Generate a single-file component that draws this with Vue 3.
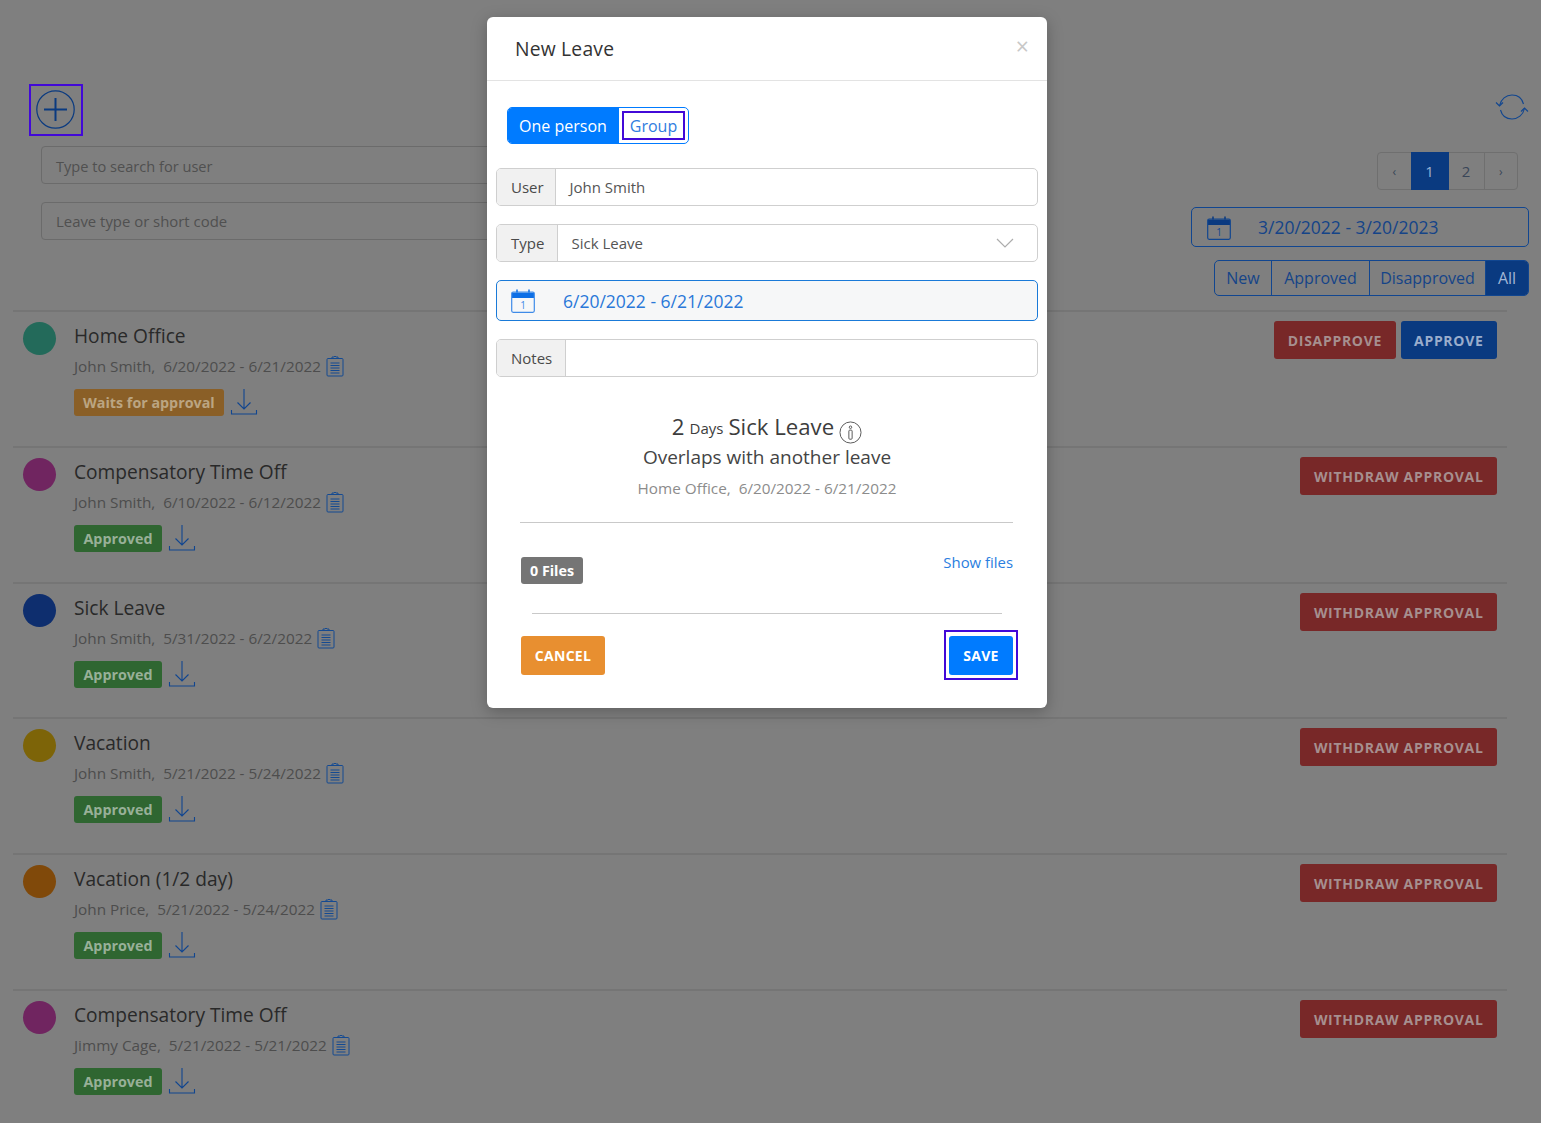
<script setup>
const rows = [
  { title: 'Home Office', color: '#236a5a', who: 'John Smith', dates: '6/20/2022 - 6/21/2022', status: 'Waits for approval', pending: true },
  { title: 'Compensatory Time Off', color: '#702560', who: 'John Smith', dates: '6/10/2022 - 6/12/2022', status: 'Approved' },
  { title: 'Sick Leave', color: '#0e2e6e', who: 'John Smith', dates: '5/31/2022 - 6/2/2022', status: 'Approved' },
  { title: 'Vacation', color: '#7d6408', who: 'John Smith', dates: '5/21/2022 - 5/24/2022', status: 'Approved' },
  { title: 'Vacation (1/2 day)', color: '#80490a', who: 'John Price', dates: '5/21/2022 - 5/24/2022', status: 'Approved' },
  { title: 'Compensatory Time Off', color: '#702560', who: 'Jimmy Cage', dates: '5/21/2022 - 5/21/2022', status: 'Approved' }
]
</script>

<template>
  <div class="page">
    <section class="top">
      <div class="top-left">
        <button class="add" aria-label="Add">
          <svg width="40" height="40" viewBox="0 0 40 40" fill="none" stroke="#0a3a80">
            <circle cx="19.500" cy="19.500" r="18.700" stroke-width="1.200" />
            <path d="M19.500 8v23M8 19.500h23" stroke-width="2" />
          </svg>
        </button>
        <div class="filter">Type to search for user</div>
        <div class="filter second">Leave type or short code</div>
      </div>
      <div class="top-right">
        <svg class="refresh" width="34" height="28" viewBox="0 0 34 28" fill="none" stroke="#114690" stroke-width="1.100">
          <path d="M4.500 12.500C6 6 11 2 17 2c5.500 0 10 3.300 11.500 9" />
          <path d="M29.500 15.500C28 22 23 26 17 26c-5.500 0-10-3.300-11.500-9" />
          <path d="M1 9.500l3.500 3.500 3.500-3.500M33 18.500l-3.500-3.500-3.500 3.500" />
        </svg>
        <div class="pager">
          <span class="pg arrow">‹</span>
          <span class="pg current">1</span>
          <span class="pg num">2</span>
          <span class="pg arrow">›</span>
        </div>
        <div class="range">
          <svg class="cal" width="24" height="25" viewBox="0 0 24 25">
            <path d="M1 4.500h22V10H1z" fill="#0a3a80" />
            <rect x=".7" y="4" width="22.600" height="20.300" rx="1.500" fill="none" stroke="#114690" stroke-width="1.200" />
            <path d="M6 1.500v3M18 1.500v3" stroke="#0a3a80" stroke-width="1.500" />
            <text x="12" y="20.500" class="cal-num cal-num-dark">1</text>
          </svg>
          <span>3/20/2022 - 3/20/2023</span>
        </div>
        <div class="seg">
          <span>New</span><span>Approved</span><span>Disapproved</span><span class="on">All</span>
        </div>
      </div>
    </section>

    <section class="list">
      <article v-for="r in rows" :key="r.title + r.who" class="row">
        <span class="dot" :style="{ background: r.color }"></span>
        <div class="info">
          <h3>{{ r.title }}</h3>
          <p class="sub">
            <span>{{ r.who }},&nbsp; {{ r.dates }}</span>
            <svg width="18" height="22" viewBox="0 0 18 22" fill="none" stroke="#144a92" stroke-width="1">
              <rect x="1" y="3.500" width="16" height="17.500" rx="1" />
              <path d="M6 3.500V2h2l1-1 1 1h2v1.500zM4.500 8h9M4.500 10.500h9M4.500 13h9M4.500 15.500h9M4.500 18h9" />
            </svg>
          </p>
          <div class="state">
            <span class="badge" :class="{ pending: r.pending }">{{ r.status }}</span>
            <svg width="28" height="28" viewBox="0 0 28 28" fill="none" stroke="#114690" stroke-width="1.100">
              <path d="M14 1v20M7.500 14.500 14 21l6.500-6.500M1.500 22v4h25v-4" />
            </svg>
          </div>
        </div>
        <div class="actions">
          <template v-if="r.pending">
            <button class="act red">DISAPPROVE</button>
            <button class="act blue">APPROVE</button>
          </template>
          <button v-else class="act red">WITHDRAW APPROVAL</button>
        </div>
      </article>
    </section>

    <div class="modal">
      <header class="m-head">
        <h2>New Leave</h2>
        <span class="close">×</span>
      </header>
      <div class="m-body">
        <div class="toggle">
          <span class="t-on">One person</span>
          <span class="t-off"><span>Group</span></span>
        </div>
        <div class="field"><label class="l-user">User</label><div class="val">John Smith</div></div>
        <div class="field"><label class="l-type">Type</label>
          <div class="val select">
            <span>Sick Leave</span>
            <svg width="18" height="10" viewBox="0 0 18 10" fill="none" stroke="#adadad" stroke-width="1.200"><path d="M1 1l8 8 8-8" /></svg>
          </div>
        </div>
        <div class="date">
          <svg class="cal" width="24" height="25" viewBox="0 0 24 25">
            <path d="M1 4.500h22V10H1z" fill="#0d6fe6" />
            <rect x=".7" y="4" width="22.600" height="20.300" rx="1.500" fill="none" stroke="#3f8be8" stroke-width="1.200" />
            <path d="M6 1.500v3M18 1.500v3" stroke="#0d6fe6" stroke-width="1.500" />
            <text x="12" y="20.500" class="cal-num">1</text>
          </svg>
          <span>6/20/2022 - 6/21/2022</span>
        </div>
        <div class="field"><label class="l-notes">Notes</label><div class="val"></div></div>

        <div class="summary">
          <div class="sum-main">
            <span class="big">2</span> <small>Days</small> <span class="big">Sick Leave</span>
            <svg width="23" height="23" viewBox="0 0 24 24" fill="none" stroke="#555" stroke-width="1"><circle cx="12" cy="12" r="11" /><circle cx="12" cy="6.500" r="1.300" /><rect x="10.300" y="9.500" width="3.400" height="9.500" rx="1" /></svg>
          </div>
          <div class="sum-over">Overlaps with another leave</div>
          <div class="sum-det">Home Office,&nbsp; 6/20/2022 - 6/21/2022</div>
        </div>
        <hr class="rule wide" />
        <div class="files">
          <span class="count">0 Files</span>
          <a class="show">Show files</a>
        </div>
        <hr class="rule narrow" />
        <div class="foot">
          <button class="btn cancel">CANCEL</button>
          <span class="save-ring"><button class="btn save">SAVE</button></span>
        </div>
      </div>
    </div>
  </div>
</template>

<style>
html, body { margin: 0; background: #7f7f7f; }
</style>

<style scoped>
.page {
  position: relative;
  width: 1541px;
  height: 1123px;
  overflow: hidden;
  background: #7f7f7f;
  font-family: "Open Sans", "Noto Sans", sans-serif;
  color: #2b2b2b;
  box-sizing: border-box;
}
.top { display: flex; justify-content: space-between; height: 310px; }
.top-left { padding: 84px 0 0 29px; width: 620px; box-sizing: border-box; }
.add {
  display: flex; align-items: center; justify-content: center;
  width: 54px; height: 52px; padding: 0; margin: 0 0 10px;
  background: none; border: 2px solid #4209d8; box-sizing: border-box;
}
.filter {
  width: 560px; height: 38px; margin-left: 12px; padding-left: 14px;
  box-sizing: border-box; border: 1px solid #6b6b6b; border-radius: 4px;
  font-size: 14.600px; line-height: 38px; color: #505050;
}
.filter.second { height: 38px; font-size: 14.900px; line-height: 36px; margin-top: 18px; }
.top-right {
  display: flex; flex-direction: column; align-items: flex-end;
  padding: 93px 12px 0 0;
}
.refresh { margin-bottom: 31px; }
.pager {
  display: flex; height: 38px; margin: 0 11px 17px 0; box-sizing: border-box;
  border: 1px solid #6f6f6f; border-radius: 4px; font-size: 15px; color: #3a4658;
}
.pg { display: flex; align-items: center; justify-content: center; }
.pg.arrow { width: 32.500px; font-size: 12px; }
.pg.arrow:last-child { border-left: 1px solid #6f6f6f; }
.pg.current { width: 38px; background: #0a3a80; color: #9db3d4; margin: -1px 0; }
.pg.num { width: 35px; }
.range {
  display: flex; align-items: center; width: 338px; height: 40px; margin-bottom: 13px;
  box-sizing: border-box; border: 1px solid #114690; border-radius: 5px;
  padding-left: 15px; font-size: 17.500px; color: #154488;
}
.range span { margin-left: 27px; }
.cal { flex: none; }
.cal-num { font-size: 10px; text-anchor: middle; fill: #3f8be8; font-family: "Open Sans", sans-serif; }
.cal-num-dark { fill: #114690; }
.seg {
  display: flex; height: 36px; box-sizing: border-box;
  border: 1px solid #114690; border-radius: 5px; overflow: hidden;
  font-size: 16px; color: #154488; line-height: 34px; text-align: center;
}
.seg span { box-sizing: border-box; border-left: 1px solid #114690; }
.seg span:first-child { border-left: 0; width: 56px; }
.seg span:nth-child(2) { width: 98px; }
.seg span:nth-child(3) { width: 116px; }
.seg span:nth-child(4) { width: 43px; }
.seg .on { background: #0a3a80; color: #a3b7d6; }

.list { margin-left: 13px; width: 1494px; }
.row {
  display: flex; height: 135.800px; box-sizing: border-box;
  border-top: 2px solid #757575; padding: 9px 10px 0 10px;
}
.dot { flex: none; width: 33px; height: 33px; border-radius: 50%; margin: 1px 18px 0 0; }
.info { flex: 1; min-width: 0; }
.info h3 { margin: 0; font-size: 19.150px; font-weight: 400; line-height: 30px; color: #292929; }
.sub {
  display: flex; align-items: center; gap: 5px; margin: 4px 0 0;
  font-size: 15.300px; line-height: 22px; color: #4d4d4d;
}
.state { display: flex; align-items: flex-end; gap: 6px; margin-top: 11px; height: 28px; }
.badge {
  height: 27px; padding: 0 9.500px; border-radius: 3px; background: #2f6631;
  font-size: 14.300px; font-weight: 700; line-height: 27px; color: #98b098;
}
.badge.pending { padding: 0 9px; background: #8a5f27; color: #bba582; }
.actions { display: flex; gap: 5px; flex: none; }
.act {
  height: 38px; padding: 1px 13.500px 0; border: 0; border-radius: 3px;
  font-family: inherit; font-size: 14px; font-weight: 700; letter-spacing: .7px; color: #a68f8f;
}
.act.red { background: #782828; }
.act.blue { background: #0a3a80; color: #9aadcc; }

.modal {
  position: absolute; left: 487px; top: 17px; width: 560px; height: 691px;
  background: #fff; border-radius: 6px; box-shadow: 0 4px 16px rgba(0, 0, 0, .25);
  color: #3a3a3a;
}
.m-head {
  display: flex; justify-content: space-between; height: 64px; box-sizing: border-box;
  padding: 0 18px 0 28px; border-bottom: 1px solid #e3e3e3;
}
.m-head h2 { margin: 0; font-size: 19.300px; font-weight: 500; line-height: 64px; color: #333; letter-spacing: .2px; }
.close { font-size: 23px; line-height: 58px; color: #c8c8c8; }
.m-body { padding: 26px 9px 0; }
.toggle {
  display: flex; width: 182px; height: 37px; margin: 0 0 24px 11px; box-sizing: border-box;
  border: 1px solid #007bff; border-radius: 5px; overflow: hidden; font-size: 16px;
}
.t-on { width: 112px; margin: -1px 0 -1px -1px; background: #007bff; color: #fff; line-height: 38px; text-align: center; flex: none; }
.t-off { flex: 1; display: flex; align-items: center; justify-content: center; color: #2f7de0; }
.t-off span { width: 63px; height: 29px; box-sizing: border-box; border: 2px solid #4209d8; line-height: 26px; text-align: center; }
.field {
  display: flex; height: 38px; margin-bottom: 18px; box-sizing: border-box;
  border: 1px solid #cfcfcf; border-radius: 5px; overflow: hidden; font-size: 15px;
}
.field label { box-sizing: border-box; padding-left: 14px; background: #f1f1f1; border-right: 1px solid #cfcfcf; line-height: 36px; color: #4a4a4a; }
.l-user { width: 59px; }
.l-type { width: 61px; }
.l-notes { width: 69px; }
.val { flex: 1; padding-left: 13.500px; line-height: 36px; color: #555; }
.select { display: flex; justify-content: space-between; align-items: center; padding-right: 23px; }
.date {
  display: flex; align-items: center; height: 41px; margin-bottom: 18px; box-sizing: border-box;
  border: 1px solid #1a7ad8; border-radius: 5px; background: #f6f7f8;
  padding-left: 14px; font-size: 17.500px; color: #2a78d8;
}
.date span { margin-left: 28px; }
.summary { text-align: center; padding-top: 11px; }
.sum-main { display: flex; justify-content: center; align-items: flex-end; gap: 5px; height: 38px; color: #3d3d3d; }
.big { font-size: 22.200px; line-height: 34px; }
.sum-main small { font-size: 15px; line-height: 31px; }
.sum-main svg { margin-bottom: 0; }
.sum-over { font-size: 19px; line-height: 27px; color: #444; }
.sum-det { font-size: 15.300px; line-height: 20px; margin-top: 7px; color: #8c8c8c; }
.rule { border: 0; border-top: 1px solid #c9c9c9; margin: 0; }
.rule.wide { margin: 24px 25px 0 24px; }
.rule.narrow { margin: 0 36px; }
.files { display: flex; justify-content: space-between; height: 90px; padding: 0 25px; }
.count {
  margin-top: 34px; height: 27px; padding: 0 9px; border-radius: 3px; background: #757575;
  font-size: 14.300px; font-weight: 700; line-height: 27px; color: #fff;
}
.show { margin-top: 28px; font-size: 14.900px; line-height: 22px; color: #2a7ee0; }
.foot { display: flex; justify-content: space-between; align-items: center; margin-top: 16px; padding: 0 20px 0 25px; }
.btn {
  height: 39px; border: 0; border-radius: 3px; color: #fff;
  font-family: inherit; font-size: 14px; font-weight: 700; letter-spacing: .3px; padding: 0;
}
.cancel { width: 84px; background: #e88f30; }
.save { width: 64px; background: #007bff; display: block; }
.save-ring { padding: 4px 3px 3px; border: 2px solid #4209d8; }
</style>
